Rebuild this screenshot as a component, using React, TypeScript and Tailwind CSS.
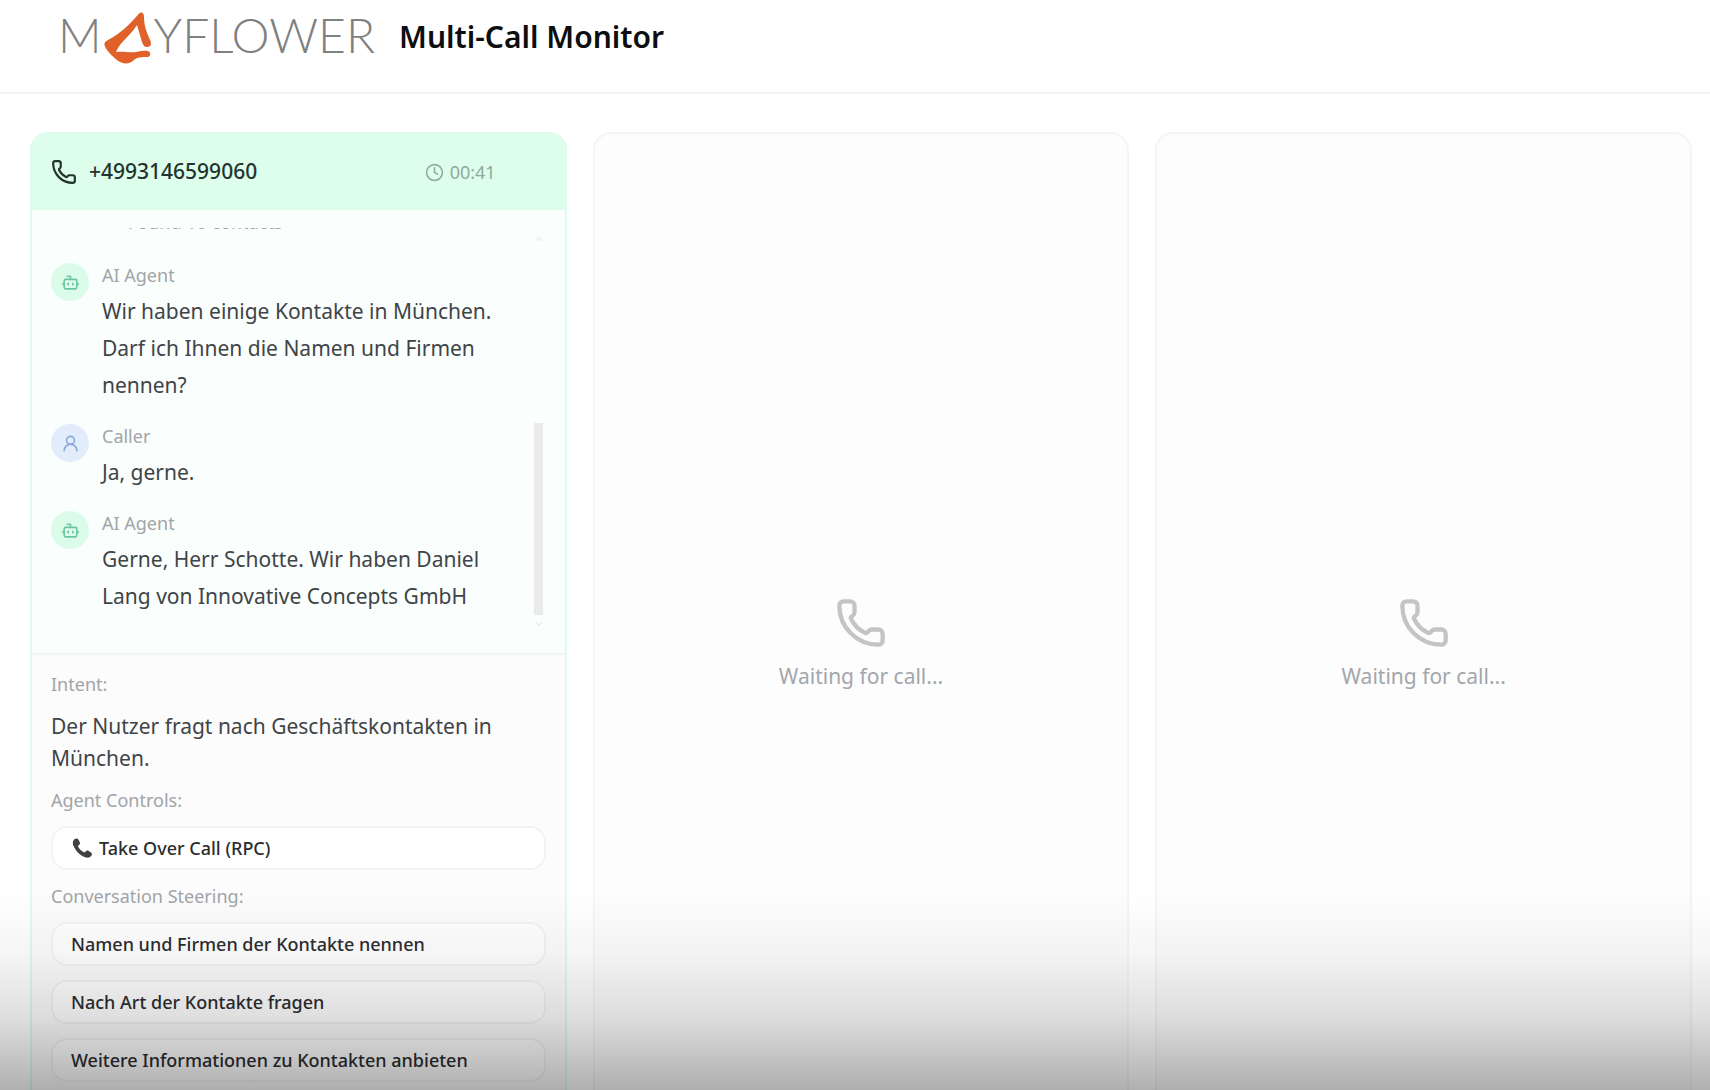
import { Bot, ChevronDown, ChevronUp, Clock, Phone, UserRound } from 'lucide-react'

type Speaker = 'agent' | 'caller'
type Message = { id: number; speaker: Speaker; text: string }

const ICON_SIZE = 26

const messages: Message[] = [
  {
    id: 1,
    speaker: 'agent',
    text: 'Wir haben einige Kontakte in München. Darf ich Ihnen die Namen und Firmen nennen?',
  },
  { id: 2, speaker: 'caller', text: 'Ja, gerne.' },
  {
    id: 3,
    speaker: 'agent',
    text: 'Gerne, Herr Schotte. Wir haben Daniel Lang von Innovative Concepts GmbH',
  },
]

const steeringOptions = [
  'Namen und Firmen der Kontakte nennen',
  'Nach Art der Kontakte fragen',
  'Weitere Informationen zu Kontakten anbieten',
]

const Logo = () => (
  <div className="flex items-start font-[Lato] font-light text-[48px] leading-[50px] text-[#7f8181]">
    <span>M</span>
    <svg width="48" height="52" viewBox="0 0 48 52" className="mt-0.5 mx-0.5" aria-label="A">
      <path
        fill="#e0622a"
        d="M35 1.500C38 -1 40 1 40 5C40 14 43 21 46.500 29C48 33 46 35 43 35C40.500 35 39 33 38 30L33 13C26 24 16 30 12 40C19 39 27 41 32 40C37 39 41 38.500 44 39C47 40 47 44 44 45C38 45 33 45 30 48C25 53 18 52 13 48C8 44 3 39 1 34.500C-0.500 31.500 1 29.500 4 28C16 22 26 12 35 1.500Z"
      />
    </svg>
    <span>YFLOWER</span>
  </div>
)

const Handset = () => (
  <svg width="22" height="22" viewBox="0 0 24 24" fill="#3f4144">
    <path d="M4 2.2C5.600 1 7.400 1.500 8.200 3L9.600 5.700C10.300 7.100 9.600 8.100 8.300 8.900C7.500 9.500 7.600 10.300 8.200 11.300C9.500 13.500 11.300 15.300 13.500 16.400C14.500 16.900 15.300 16.800 15.800 16C16.500 14.800 17.600 14.300 18.900 15L21.500 16.500C23 17.400 23.300 19 22.200 20.500C20.300 23.100 16.600 23.200 12.800 21C8.700 18.600 5.200 14.800 3.100 10.600C1.500 7.300 1.500 4.100 4 2.200Z" />
  </svg>
)

const MessageItem = ({ speaker, text }: { speaker: Speaker; text: string }) => {
  const isAgent = speaker === 'agent'
  return (
    <li className="flex gap-[13px]">
      <div
        className={[
          'size-[38px] shrink-0 mt-0.5 rounded-full flex items-center justify-center',
          isAgent ? 'bg-[#dafce9] text-[#6cc5a0]' : 'bg-[#e2ecfb] text-[#86a8da]',
        ].join(' ')}
      >
        {isAgent ? <Bot size={19} /> : <UserRound size={19} />}
      </div>
      <div className="flex flex-col gap-1">
        <span className="text-[18px] leading-7 text-[#a1a5a7]">{isAgent ? 'AI Agent' : 'Caller'}</span>
        <p className="text-[21px] leading-[37px] text-[#404447]">{text}</p>
      </div>
    </li>
  )
}

const ControlButton = ({ children }: { children: React.ReactNode }) => (
  <button className="h-11 w-full shrink-0 flex items-center gap-1.5 px-[18px] rounded-2xl border-2 border-[#f3f3f4] bg-white text-[18px] font-medium text-[#2b2d30]">
    {children}
  </button>
)

const SectionLabel = ({ children }: { children: React.ReactNode }) => (
  <h3 className="text-[18px] leading-7 text-[#a1a4a7]">{children}</h3>
)

const ActiveCall = () => (
  <section className="flex flex-col rounded-[18px] border-2 border-[#dcfcec] bg-[#fcfcfd] overflow-hidden">
    <div className="h-[76px] shrink-0 flex items-center justify-between pl-[19px] pr-[69px] bg-[#dcfeea]">
      <div className="flex items-center gap-3 text-[#24332d]">
        <Phone size={ICON_SIZE} />
        <h2 className="text-[21px] font-medium">+4993146599060</h2>
      </div>
      <div className="flex items-center gap-1.5 text-[18px] text-[#94aaa0]">
        <Clock size={19} />
        <span>00:41</span>
      </div>
    </div>

    <div className="h-[443px] shrink-0 flex justify-between py-[18px] pl-[19px] pr-[21px] bg-[#fafefd]">
      {/* newest messages stay at the bottom, older ones scroll out at the top */}
      <div className="flex flex-col justify-end w-[470px] pb-5 overflow-hidden">
        <p className="pl-[77px] pb-[25px] text-[18px] leading-7 text-[#a1a4a7]">Found 10 contacts</p>
        <ul className="flex flex-col gap-[18px]">
          {messages.map((m) => (
            <MessageItem key={m.id} speaker={m.speaker} text={m.text} />
          ))}
        </ul>
      </div>
      <div className="flex flex-col items-center py-1.5 text-[#d3d6d6]">
        <ChevronUp size={10} />
        <div className="mt-auto mb-1 w-[9px] h-[192px] bg-[#ebebed]" />
        <ChevronDown size={10} />
      </div>
    </div>

    <div className="flex flex-col gap-3 px-[19px] pt-[15px] pb-[71px] border-t-2 border-[#f3f5f5]">
      <SectionLabel>Intent:</SectionLabel>
      <p className="text-[21px] leading-8 text-[#404447]">
        Der Nutzer fragt nach Geschäftskontakten in München.
      </p>
      <SectionLabel>Agent Controls:</SectionLabel>
      <ControlButton>
        <Handset />
        Take Over Call (RPC)
      </ControlButton>
      <SectionLabel>Conversation Steering:</SectionLabel>
      <div className="flex flex-col gap-3.5">
        {steeringOptions.map((option) => (
          <ControlButton key={option}>{option}</ControlButton>
        ))}
      </div>
    </div>
  </section>
)

const WaitingCall = () => (
  <section className="flex flex-col items-center justify-center gap-3 rounded-[18px] border-2 border-[#f5f5f6] bg-[#fdfdfd]">
    <Phone size={52} className="text-[#c3c4c6]" />
    <p className="text-[21px] leading-[30px] text-[#a3a6ab]">Waiting for call...</p>
  </section>
)

const App = () => {
  return (
    <div className="relative h-screen overflow-hidden bg-white font-['Noto_Sans',sans-serif]">
      <header className="h-[94px] flex items-start gap-6 pt-2.5 pl-[58px] border-b-2 border-[#f4f4f5]">
        <Logo />
        <h1 className="text-[30px] leading-[54px] font-semibold text-[#0d0e10]">Multi-Call Monitor</h1>
      </header>

      <main className="grid grid-cols-3 gap-[26px] pt-[38px] pl-[30px] pr-[18px]">
        <ActiveCall />
        <WaitingCall />
        <WaitingCall />
      </main>

      <div className="pointer-events-none absolute inset-x-0 bottom-0 h-[200px] bg-[linear-gradient(to_bottom,transparent,rgba(0,0,0,0.04)_32%,rgba(0,0,0,0.13)_64%,rgba(0,0,0,0.31))]" />
    </div>
  )
}

export default App
